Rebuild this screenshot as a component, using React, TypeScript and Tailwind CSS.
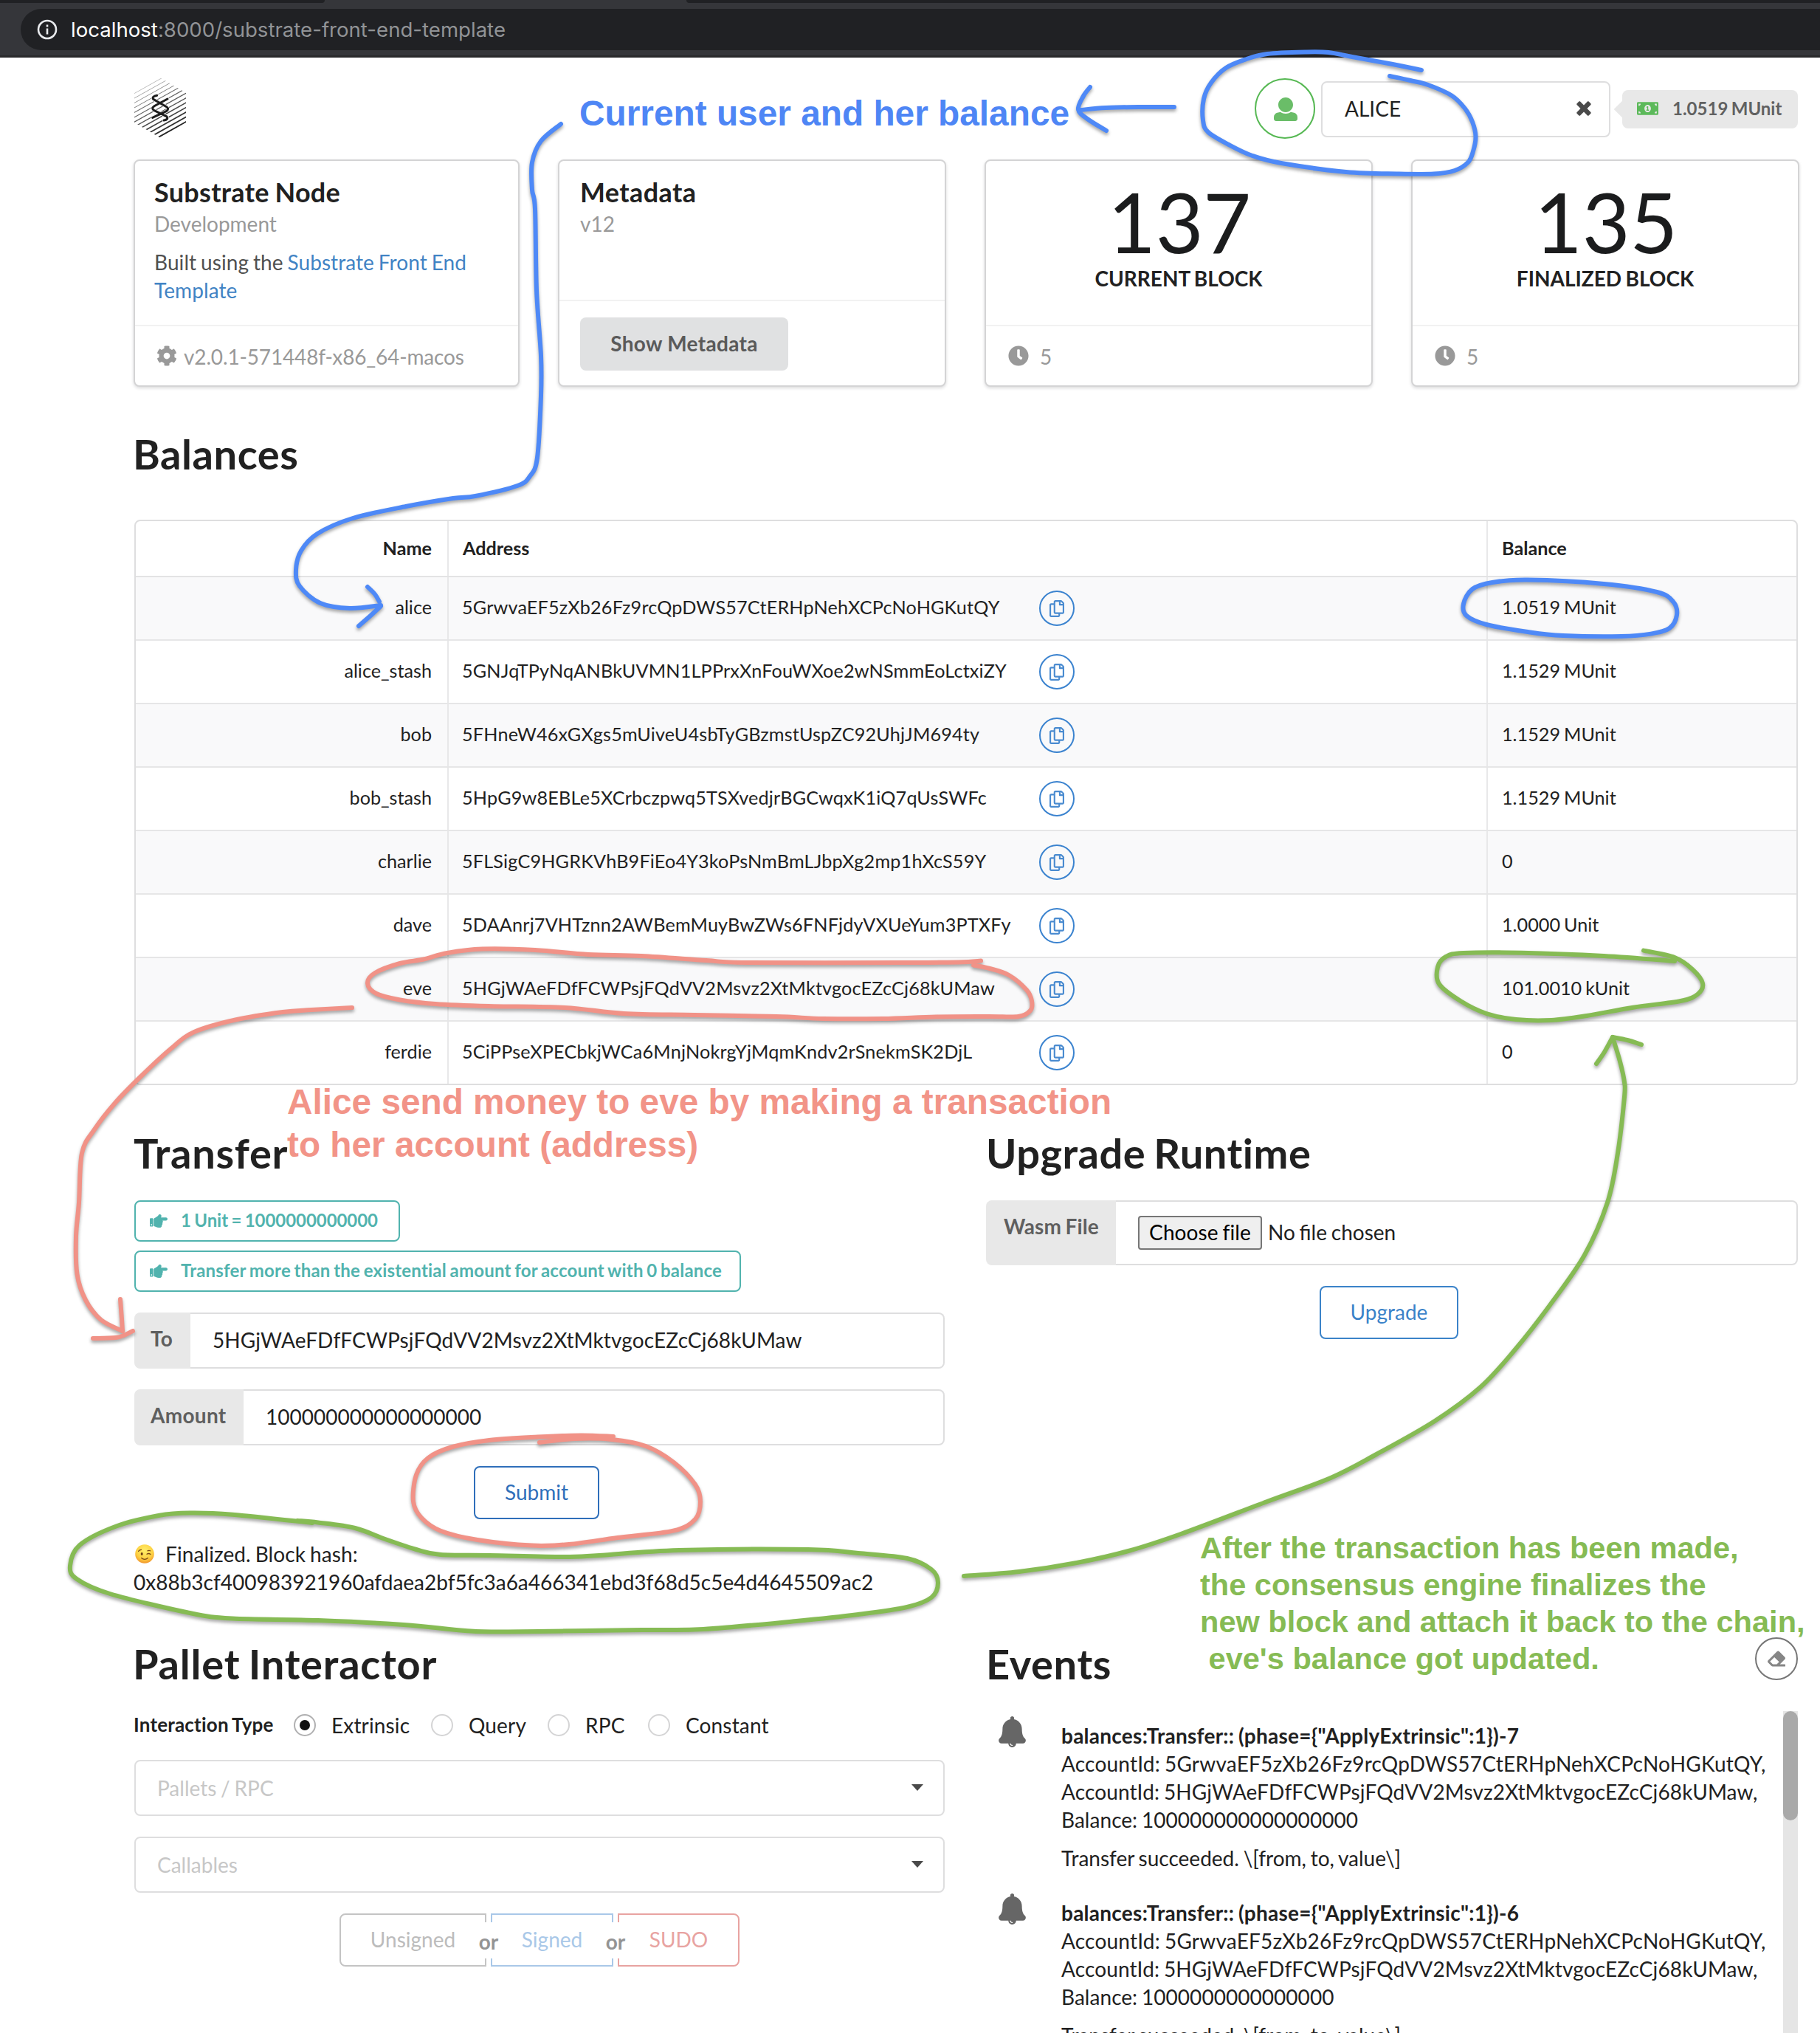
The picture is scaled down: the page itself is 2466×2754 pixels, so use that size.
import type { ReactNode } from 'react'
import { FaCog, FaClock, FaRegCopy, FaHandPointRight, FaEraser, FaMoneyBillAlt } from 'react-icons/fa'

const accounts = [
  { name: 'alice', address: '5GrwvaEF5zXb26Fz9rcQpDWS57CtERHpNehXCPcNoHGKutQY', balance: '1.0519 MUnit' },
  { name: 'alice_stash', address: '5GNJqTPyNqANBkUVMN1LPPrxXnFouWXoe2wNSmmEoLctxiZY', balance: '1.1529 MUnit' },
  { name: 'bob', address: '5FHneW46xGXgs5mUiveU4sbTyGBzmstUspZC92UhjJM694ty', balance: '1.1529 MUnit' },
  { name: 'bob_stash', address: '5HpG9w8EBLe5XCrbczpwq5TSXvedjrBGCwqxK1iQ7qUsSWFc', balance: '1.1529 MUnit' },
  { name: 'charlie', address: '5FLSigC9HGRKVhB9FiEo4Y3koPsNmBmLJbpXg2mp1hXcS59Y', balance: '0' },
  { name: 'dave', address: '5DAAnrj7VHTznn2AWBemMuyBwZWs6FNFjdyVXUeYum3PTXFy', balance: '1.0000 Unit' },
  { name: 'eve', address: '5HGjWAeFDfFCWPsjFQdVV2Msvz2XtMktvgocEZcCj68kUMaw', balance: '101.0010 kUnit' },
  { name: 'ferdie', address: '5CiPPseXPECbkjWCa6MnjNokrgYjMqmKndv2rSnekmSK2DjL', balance: '0' },
]

const events = [
  { id: 7, amount: '100000000000000000' },
  { id: 6, amount: '1000000000000000' },
]

type Point = [number, number]

// Catmull-Rom spline through the points, as cubic segments.
function smooth(points: Point[], closed = false): string {
  const n = points.length
  const at = (i: number): Point => (closed ? points[(i + n) % n] : points[Math.max(0, Math.min(n - 1, i))])
  let d = `M${points[0][0]} ${points[0][1]}`
  const segments = closed ? n : n - 1
  for (let i = 0; i < segments; i++) {
    const [p0, p1, p2, p3] = [at(i - 1), at(i), at(i + 1), at(i + 2)]
    d += `C${p1[0] + (p2[0] - p0[0]) / 6} ${p1[1] + (p2[1] - p0[1]) / 6} ${p2[0] - (p3[0] - p1[0]) / 6} ${p2[1] - (p3[1] - p1[1]) / 6} ${p2[0]} ${p2[1]}`
  }
  return d
}

const blueStrokes = [
  smooth([[760, 168], [733, 191], [721, 220], [721, 257], [725, 283], [727, 393], [733, 482], [733, 536], [728, 620], [718, 645], [701, 658], [644, 672], [614, 675], [550, 686], [478, 702], [430, 723], [408, 746], [401, 772], [406, 794], [434, 817], [474, 824], [516, 820]]),
  smooth([[498, 795], [508, 805], [514, 815]]),
  smooth([[516, 821], [502, 834], [486, 848]]),
  smooth([[1926, 95], [1887, 87], [1832, 77], [1800, 71], [1768, 70.5], [1717, 73], [1689, 80], [1661, 92], [1641, 112], [1631, 134], [1630, 163], [1637, 179], [1665, 196], [1697, 211], [1736, 221], [1824, 233], [1895, 235.5], [1943, 235.5], [1971, 231], [1989, 220], [1996, 205], [1999.5, 185], [1995, 165], [1985, 147], [1967, 129.5], [1935, 115], [1911, 109], [1883, 103]]),
  smooth([[1591, 145], [1542, 145], [1498, 146], [1464, 149]]),
  smooth([[1477, 118], [1468, 130], [1461, 148.5], [1474, 161.5], [1499, 177]]),
  smooth([[2070, 785.6], [2173, 791], [2245, 802], [2267, 815], [2272, 833], [2262, 851], [2237, 858.6], [2197, 862], [2118, 861], [2070, 856], [2014, 846], [1987, 834], [1983, 818], [1995, 798], [2022, 789]], true),
]

const pinkStrokes = [
  smooth([[1329, 1301.5], [1299, 1303.5], [1220, 1304], [1012, 1304], [957, 1301], [869, 1295], [797, 1293], [725, 1287], [654, 1285.6], [606, 1291], [574, 1299.5], [542, 1305], [508, 1318], [498, 1332], [510, 1346], [542, 1354.5], [590, 1360], [662, 1363], [765, 1365], [845, 1373], [941, 1375], [1052, 1377], [1116, 1380], [1196, 1380], [1268, 1377.5], [1339, 1377], [1380, 1377], [1396, 1369], [1398, 1356], [1391, 1341], [1367, 1321], [1341, 1312], [1319, 1307.5]]),
  smooth([[477, 1365], [422, 1368], [383, 1371], [319, 1381.5], [263, 1398], [231, 1421], [191, 1458], [156, 1494], [128, 1530], [111, 1562], [107, 1629], [103, 1675], [104.5, 1726], [116, 1761], [137, 1788], [166, 1803]]),
  smooth([[163, 1760], [165, 1787], [166, 1803]]),
  smooth([[126, 1813], [157, 1812], [170, 1808], [180, 1803]]),
  smooth([[831, 1946], [787, 1944.5], [729, 1946.6], [663, 1951], [613, 1960], [580, 1975], [564, 1998], [560, 2034], [571, 2056], [597, 2073.7], [647, 2086], [721, 2093.6], [771, 2092], [837, 2083], [912, 2073.7], [942, 2058], [949, 2034], [942, 2011], [913, 1981], [875, 1959], [829, 1950], [779, 1949], [731, 1954]]),
]

const greenStrokes = [
  smooth([[403, 2060], [431, 2062.5], [481, 2070], [522, 2085], [564, 2099], [597, 2106], [663, 2107], [763, 2109], [812, 2107], [920, 2100], [1095, 2099], [1163, 2104], [1229, 2111], [1262, 2126], [1271, 2144], [1262, 2164], [1229, 2177], [1163, 2187], [1079, 2196], [953, 2207], [870, 2208], [688, 2210.4], [630, 2209], [547, 2201], [431, 2195], [315, 2192.5], [257, 2185], [149, 2159], [104, 2139], [95, 2121], [108, 2093], [157.5, 2067.5], [215, 2053], [257, 2049.5], [315, 2051.7], [423, 2063]]),
  smooth([[1306, 2135], [1381, 2129], [1459, 2117], [1529, 2101], [1600, 2078], [1717, 2034], [1803, 2002], [1865, 1970], [1944, 1925], [2006, 1879], [2053, 1828], [2100, 1768], [2147, 1700], [2178, 1629], [2192, 1562], [2201, 1486], [2201, 1466], [2195, 1438], [2185, 1405]]),
  smooth([[2163, 1441], [2174, 1425], [2185, 1405]]),
  smooth([[2185, 1405], [2205, 1409], [2224, 1415]]),
  smooth([[2227, 1287.6], [2269, 1297], [2293, 1313], [2307, 1332], [2300, 1347], [2277, 1356], [2213, 1364.7], [2150, 1376], [2102, 1382], [2054, 1381], [2014, 1373], [1979, 1356], [1950, 1333], [1948, 1310], [1959, 1296], [1983, 1291], [2062, 1290.7], [2173, 1295], [2269, 1302]]),
]

function Strokes({ color, paths }: { color: string; paths: string[] }) {
  return (
    <g stroke={color} fill="none" strokeWidth="6" strokeLinecap="round" strokeLinejoin="round">
      {paths.map((d) => (
        <path key={d} d={d} />
      ))}
    </g>
  )
}

function Logo() {
  return (
    <svg viewBox="36 32 210 240" className="h-[80px] w-[70px]">
      <clipPath id="hex">
        <polygon points="142,30 246,91 246,212 140,273 36,212 36,91" />
      </clipPath>
      <g clipPath="url(#hex)">
        {Array.from({ length: 13 }, (_, k) => (
          <line key={k} x1={30} x2={250} y1={97 + 19.4 * k} y2={-26 + 19.4 * k} stroke="#222" strokeWidth={1.8 + k * 0.34} strokeOpacity={0.5 + k * 0.04} />
        ))}
      </g>
      <g fill="none" strokeLinecap="round">
        <g stroke="#fff" strokeWidth="13">
          <path d="M128 102Q106 106 113 117L167 148Q179 157 166 166L110 192" />
          <path d="M171 116L117 145Q103 155 117 163L168 188Q176 200 156 203" />
        </g>
        <g stroke="#1d1d1d" strokeWidth="9">
          <path d="M128 102Q106 106 113 117L167 148Q179 157 166 166L110 192" />
          <path d="M171 116L117 145Q103 155 117 163L168 188Q176 200 156 203" />
        </g>
      </g>
    </svg>
  )
}

function UserIcon() {
  return (
    <svg viewBox="0 0 512 512" fill="currentColor" className="h-8 w-8">
      <path d="M256 0c88.366 0 160 71.634 160 160s-71.634 160-160 160S96 248.366 96 160 167.634 0 256 0zm183.283 333.821l-71.313-17.828c-74.923 53.89-165.738 41.864-223.94 0l-71.313 17.828C29.981 344.505 0 382.903 0 426.955V464c0 26.51 21.49 48 48 48h416c26.51 0 48-21.49 48-48v-37.045c0-44.052-29.981-82.45-72.717-93.134z" />
    </svg>
  )
}

function CloseIcon() {
  return (
    <svg viewBox="0 0 384 512" fill="currentColor" className="h-[26px] w-5">
      <path d="M323.1 441l53.9-53.9c9.4-9.4 9.4-24.5 0-33.9L279.8 256l97.2-97.2c9.4-9.4 9.4-24.5 0-33.9L323.1 71c-9.4-9.4-24.5-9.4-33.9 0L192 168.2 94.8 71c-9.4-9.4-24.5-9.4-33.9 0L7 124.9c-9.4 9.4-9.4 24.5 0 33.9l97.2 97.2L7 353.2c-9.4 9.4-9.4 24.5 0 33.9L60.9 441c9.4 9.4 24.5 9.4 33.9 0l97.2-97.2 97.2 97.2c9.3 9.3 24.5 9.3 33.9 0z" />
    </svg>
  )
}

function BellIcon() {
  return (
    <svg viewBox="0 0 448 512" fill="currentColor" className="h-[42px] w-[37px]">
      <path d="M433.884 366.059C411.634 343.809 384 316.118 384 208c0-79.394-57.831-145.269-133.663-157.83A31.845 31.845 0 0 0 256 32c0-17.673-14.327-32-32-32s-32 14.327-32 32c0 6.75 2.095 13.008 5.663 18.17C121.831 62.731 64 128.606 64 208c0 108.118-27.643 135.809-49.893 158.059C-16.042 396.208 5.325 448 48.048 448H160c0 35.346 28.654 64 64 64s64-28.654 64-64h111.943c42.638 0 64.151-51.731 33.941-81.941zM224 472a8 8 0 0 1 0 16c-22.056 0-40-17.944-40-40h16c0 13.234 10.766 24 24 24z" />
    </svg>
  )
}

function WinkFace() {
  return (
    <svg viewBox="0 0 26 26" className="h-[26px] w-[26px]">
      <defs>
        <radialGradient id="face" cx="50%" cy="32%" r="68%">
          <stop offset="0" stopColor="#ffee6a" />
          <stop offset="0.65" stopColor="#fdd042" />
          <stop offset="1" stopColor="#f1962c" />
        </radialGradient>
      </defs>
      <circle cx="13" cy="13" r="12.8" fill="url(#face)" />
      <ellipse cx="9.2" cy="13" rx="1.5" ry="2.1" fill="#6b3d12" />
      <g stroke="#7a4716" fill="none" strokeLinecap="round" strokeWidth="1.3">
        <path d="M16 13.2Q18.6 11.6 21 13.6" />
        <path d="M4.6 9.4Q6 7.4 8.4 7.4" />
        <path d="M17 8.8Q19 7.8 20.6 8.8" />
        <path d="M8.6 18.6Q13 22 17.4 18.6" />
      </g>
    </svg>
  )
}

function Card({ children, extra, tall }: { children: ReactNode; extra: ReactNode; tall?: boolean }) {
  return (
    <div className="flex h-[308px] flex-col rounded-lg border-2 border-[#d4d4d5] bg-white shadow-[0_2px_4px_0_#dcdcdd]">
      <div className="flex-1 px-[26px] pt-5">{children}</div>
      <div className={tall ? 'h-[116px] border-t-2 border-[#f2f2f2] px-[26px] pt-[22px]' : 'h-[82px] border-t-2 border-[#f2f2f2] px-[26px] pt-[22px]'}>{extra}</div>
    </div>
  )
}

function BlockCard({ value, label }: { value: string; label: string }) {
  return (
    <Card
      extra={
        <div className="flex h-[38px] items-center pl-1 text-[#999]">
          <FaClock className="-mt-0.5 h-7 w-7" />
          <span className="ml-[15px]">5</span>
        </div>
      }
    >
      <div className="flex flex-col items-center pt-3">
        <div className="h-[100px] pl-0.5 text-[112px] leading-[100px] tracking-[-0.3px] text-[#1b1c1d]">{value}</div>
        <div className="mt-2 h-[38px] font-bold">{label}</div>
      </div>
    </Card>
  )
}

function Heading({ children, className }: { children: ReactNode; className: string }) {
  return <h1 className={`h-[72px] whitespace-nowrap text-[56px] font-bold leading-[72px] [word-spacing:-3px] ${className}`}>{children}</h1>
}

function Hint({ children, className = '' }: { children: ReactNode; className?: string }) {
  return (
    <div className={`flex h-14 items-center self-start rounded-lg border-2 border-[#51b3ae] pb-[3px] pl-[19px] text-2xl font-bold text-[#51b3ae] ${className}`}>
      <FaHandPointRight className="mt-0.5 h-6 w-6" />
      <span className="ml-[18px] whitespace-nowrap">{children}</span>
    </div>
  )
}

function Field({ label, children, className = '' }: { label: string; children: ReactNode; className?: string }) {
  return (
    <div className="flex h-[76px] w-[1098px]">
      <div className={`rounded-l-lg bg-[#e8e8e8] pl-[22px] pt-4 font-bold tracking-[0.3px] text-[#5f5f5f] ${className}`}>{label}</div>
      <div className="flex flex-1 items-center rounded-r-lg border-2 border-l-0 border-[#dededf] pb-0.5 pl-[30px]">{children}</div>
    </div>
  )
}

function Select({ label }: { label: string }) {
  return (
    <div className="flex h-[76px] w-[1098px] items-center justify-between rounded-lg border-2 border-[#dededf] pb-px pl-[29px] pr-[27px] text-[#c7c7c7]">
      <span>{label}</span>
      <svg viewBox="0 0 16 9" className="h-[9px] w-4 fill-[#4a4a4a]">
        <path d="M0 0H16L8 9Z" />
      </svg>
    </div>
  )
}

function Radio({ label, checked, className }: { label: string; checked?: boolean; className: string }) {
  return (
    <div className={`flex items-center ${className}`}>
      <span className={checked ? 'flex h-[30px] w-[30px] items-center justify-center rounded-full border-2 border-[#b0b0b1]' : 'h-[30px] w-[30px] rounded-full border-2 border-[#d4d4d5]'}>
        {checked && <span className="h-[14px] w-[14px] rounded-full bg-[#111]" />}
      </span>
      <span className="ml-[21px] tracking-[0.15px]">{label}</span>
    </div>
  )
}

function Or() {
  return (
    <div className="relative z-10 w-1.5">
      <span className="absolute -left-3 top-3 flex h-[49px] w-[30px] items-center justify-center bg-white pb-0.5 pt-1 font-bold text-[#949494]">or</span>
    </div>
  )
}

export default function App() {
  return (
    <div className="relative flex h-[2754px] w-[2466px] flex-col overflow-hidden bg-white font-['Lato',sans-serif] text-[28px] leading-[38px] text-[#212121] [word-spacing:-1.4px]">
      {/* Browser chrome */}
      <div className="h-[78px] border-b-[3px] border-[#29292b] bg-[#35363a]">
        <div className="flex justify-between">
          <div className="h-1 w-[440px] rounded-br bg-[#202124]" />
          <div className="h-1 w-[1536px] rounded-bl bg-[#202124]" />
        </div>
        <div className="ml-7 mt-2 flex h-14 items-center rounded-l-full bg-[#202124] pl-[22px]">
          <svg viewBox="0 0 28 28" className="h-7 w-7" fill="none" stroke="#e8eaed" strokeWidth="2.6">
            <circle cx="14" cy="14" r="12" />
            <path d="M14 12.5V20.5M14 7.6V10.4" />
          </svg>
          <span className="ml-[18px] whitespace-nowrap font-['Inter',sans-serif] text-[27.6px]">
            <span className="text-white">localhost</span>
            <span className="text-[#919396]">:8000/substrate-front-end-template</span>
          </span>
        </div>
      </div>

      {/* Account bar */}
      <div className="flex h-[138px] items-start justify-between pl-[182px] pr-[30px] pt-7">
        <Logo />
        <div className="flex items-center">
          <div className="flex h-[82px] w-[82px] items-center justify-center rounded-full border-2 border-[#56b853] pl-0.5 pt-0.5 text-[#6abd68]">
            <UserIcon />
          </div>
          <div className="ml-2 mt-0.5 flex h-[76px] w-[392px] items-center justify-between rounded-lg border-2 border-[#dededf] pl-[30px] pr-6">
            <span className="-mt-0.5">ALICE</span>
            <span className="-mt-0.5 text-[#4a4a4a]">
              <CloseIcon />
            </span>
          </div>
          <div className="relative ml-4 mt-px flex h-[52px] w-[238px] items-center rounded-lg bg-[#e8e8e8] pl-5 text-2xl font-bold text-[#616161]">
            <span className="absolute -left-2 top-[18px] h-4 w-4 rotate-45 bg-[#e8e8e8]" />
            <FaMoneyBillAlt className="relative -mt-0.5 h-6 w-[29px] text-[#5cb95a]" />
            <span className="-mt-px ml-[19px] whitespace-nowrap">1.0519 MUnit</span>
          </div>
        </div>
      </div>

      {/* Node, metadata and block cards */}
      <div className="ml-[181px] grid grid-cols-[523px_526px_526px_526px] gap-[52px]">
        <Card
          extra={
            <div className="flex h-[38px] items-center pl-[3px] text-[#999]">
              <FaCog className="-mt-0.5 h-7 w-7" />
              <span className="ml-[9px] whitespace-nowrap tracking-[-0.15px]">v2.0.1-571448f-x86_64-macos</span>
            </div>
          }
        >
          <div className="h-11 text-[36px] font-bold leading-[44px] tracking-[0.3px]">Substrate Node</div>
          <div className="mt-0.5 text-[#999]">Development</div>
          <p className="mt-[14px] tracking-[0.08px] text-[#505050]">
            Built using the <span className="text-[#4183c4]">Substrate Front End Template</span>
          </p>
        </Card>
        <Card
          tall
          extra={<button className="ml-0.5 h-[72px] w-[282px] rounded-lg bg-[#e0e1e2] pb-[3px] font-bold tracking-[0.3px] text-[#5a5a5a]">Show Metadata</button>}
        >
          <div className="h-11 pl-0.5 text-[36px] font-bold leading-[44px] tracking-[0.4px]">Metadata</div>
          <div className="mt-0.5 pl-0.5 text-[#999]">v12</div>
        </Card>
        <BlockCard value="137" label="CURRENT BLOCK" />
        <BlockCard value="135" label="FINALIZED BLOCK" />
      </div>

      {/* Balances */}
      <div className="ml-[182px] mt-[55px] w-[2254px]">
        <Heading className="-ml-0.5 tracking-[0.6px]">Balances</Heading>
        <div className="mt-[53px] overflow-hidden rounded-lg border-2 border-[#dededf] text-[25.2px]">
          <div className="grid h-[76px] grid-cols-[422px_1408px_1fr] border-b-2 border-[#e3e3e4] font-bold">
            <div className="flex items-center justify-end pb-0.5 pr-[21px]">Name</div>
            <div className="flex items-center border-l-2 border-[#e8e8e9] pb-0.5 pl-[19px]">Address</div>
            <div className="flex items-center border-l-2 border-[#e8e8e9] pb-0.5 pl-[19px]">Balance</div>
          </div>
          {accounts.map((a) => (
            <div key={a.name} className="grid h-[86px] grid-cols-[422px_1408px_1fr] border-b-2 border-[#e6e6e7] odd:bg-white even:bg-[#f9f9fa] last:h-[84px] last:border-b-0">
              <div className="flex items-center justify-end pb-[5px] pr-[21px]">{a.name}</div>
              <div className="flex items-center border-l-2 border-[#e8e8e9] pl-[18px]">
                <span className="w-[782px] whitespace-nowrap pb-[5px] tracking-[0.18px]">{a.address}</span>
                <span className="flex h-12 w-12 items-center justify-center rounded-full border-2 border-[#3b83cf] text-[#4a8bd0]">
                  <FaRegCopy className="h-[23px] w-5" />
                </span>
              </div>
              <div className="flex items-center border-l-2 border-[#e8e8e9] pb-[5px] pl-[19px]">{a.balance}</div>
            </div>
          ))}
        </div>
      </div>

      {/* Transfer and upgrade */}
      <div className="ml-[182px] mt-14 flex h-[692px]">
        <div className="flex w-[1154px] flex-col">
          <Heading className="-ml-px tracking-[0.75px]">Transfer</Heading>
          <Hint className="mt-7 w-[360px] tracking-[-0.05px]">1 Unit = 1000000000000</Hint>
          <Hint className="mt-3 w-[822px] tracking-[0.2px]">Transfer more than the existential amount for account with 0 balance</Hint>
          <div className="mt-7 flex flex-col gap-7">
            <Field label="To" className="w-[76px]">
              <span className="tracking-[0.12px]">5HGjWAeFDfFCWPsjFQdVV2Msvz2XtMktvgocEZcCj68kUMaw</span>
            </Field>
            <Field label="Amount" className="w-[148px]">100000000000000000</Field>
          </div>
          <button className="ml-[460px] mt-7 h-[72px] w-[170px] rounded-lg border-2 border-[#2f6fba] pb-0.5 text-[#2f6fba]">Submit</button>
          <div className="-ml-px mt-7 whitespace-nowrap">
            <div className="flex items-center">
              <span className="ml-0.5">
                <WinkFace />
              </span>
              <span className="ml-[15px] tracking-[0.1px]">Finalized. Block hash:</span>
            </div>
            <div>0x88b3cf400983921960afdaea2bf5fc3a6a466341ebd3f68d5c5e4d4645509ac2</div>
          </div>
        </div>
        <div className="w-[1100px]">
          <Heading className="tracking-[0.5px]">Upgrade Runtime</Heading>
          <div className="mt-7 flex h-[88px]">
            <div className="w-[176px] rounded-l-lg bg-[#e8e8e8] pl-6 pt-4 font-bold tracking-[0.1px] text-[#5f5f5f]">Wasm File</div>
            <div className="flex flex-1 items-center rounded-r-lg border-2 border-l-0 border-[#dededf] pl-[30px]">
              <span className="flex h-[46px] w-[168px] items-center justify-center rounded border-2 border-[#767676] bg-[#efefef] pb-0.5 tracking-[0.1px] text-black">Choose file</span>
              <span className="ml-2 pb-0.5">No file chosen</span>
            </div>
          </div>
          <button className="ml-[452px] mt-7 h-[72px] w-[188px] rounded-lg border-2 border-[#3b83c9] pb-0.5 text-[#3b83c9]">Upgrade</button>
        </div>
      </div>

      {/* Pallet interactor and events */}
      <div className="ml-[182px] flex">
        <div className="flex w-[1154px] flex-col">
          <Heading className="-ml-0.5 tracking-[0.8px]">Pallet Interactor</Heading>
          <div className="mt-[27px] flex h-10 items-center">
            <span className="-ml-px w-[217px] whitespace-nowrap pb-0.5 text-[26px] font-bold tracking-[0.2px]">Interaction Type</span>
            <Radio label="Extrinsic" checked className="w-[186px]" />
            <Radio label="Query" className="w-[158px]" />
            <Radio label="RPC" className="w-[136px]" />
            <Radio label="Constant" className="w-[170px]" />
          </div>
          <div className="mt-[27px] flex flex-col gap-7">
            <Select label="Pallets / RPC" />
            <Select label="Callables" />
          </div>
          <div className="ml-[278px] mt-7 flex h-[72px]">
            <button className="w-[199px] rounded-l-lg border-2 border-[#c4c4c4] pb-0.5 text-[#bcbcbc]">Unsigned</button>
            <Or />
            <button className="w-[166px] border-2 border-[#a9c8e8] pb-0.5 text-[#a9c8e8]">Signed</button>
            <Or />
            <button className="w-[165px] rounded-r-lg border-2 border-[#e8a3a1] pb-0.5 text-[#e8a3a1]">SUDO</button>
          </div>
        </div>
        <div className="w-[1100px]">
          <div className="flex h-[100px] items-start justify-between">
            <Heading className="tracking-[0.6px]">Events</Heading>
            <span className="flex h-[58px] w-[58px] items-center justify-center rounded-full border-2 border-[#767676] pr-px text-[#868686]">
              <FaEraser className="h-6 w-6" />
            </span>
          </div>
          <div className="flex h-[436px] overflow-hidden">
            <div className="flex-1 pl-[17px]">
              {events.map((e) => (
                <div key={e.id} className="flex h-60 whitespace-nowrap">
                  <div className="w-[85px] pt-[7px] text-[#666]">
                    <BellIcon />
                  </div>
                  <div className="pt-[14px]">
                    <div className="font-bold tracking-[0.26px]">{`balances:Transfer:: (phase={"ApplyExtrinsic":1})-${e.id}`}</div>
                    <div className="tracking-[0.21px]">AccountId: 5GrwvaEF5zXb26Fz9rcQpDWS57CtERHpNehXCPcNoHGKutQY,</div>
                    <div className="tracking-[0.12px]">AccountId: 5HGjWAeFDfFCWPsjFQdVV2Msvz2XtMktvgocEZcCj68kUMaw,</div>
                    <div className="tracking-[0.04px]">Balance: {e.amount}</div>
                    <div className="mt-[14px]">{'Transfer succeeded. \\[from, to, value\\]'}</div>
                  </div>
                </div>
              ))}
            </div>
            <div className="w-5 bg-[#e5e5e5]">
              <div className="h-[148px] rounded-full bg-[#a9a9a9]" />
            </div>
          </div>
        </div>
      </div>

      {/* Hand-drawn annotations laid over the page */}
      <svg viewBox="0 0 2466 2754" className="pointer-events-none absolute inset-0 h-full w-full drop-shadow-[0_3px_2px_rgba(0,0,0,0.35)]">
        <Strokes color="#4e89f7" paths={blueStrokes} />
        <Strokes color="#f19287" paths={pinkStrokes} />
        <Strokes color="#86bb54" paths={greenStrokes} />
      </svg>
      <div className="pointer-events-none absolute inset-0 whitespace-pre font-['Liberation_Sans',sans-serif] font-bold [word-spacing:0px]">
        <div className="absolute left-[785px] top-[126px] text-[47.8px] leading-[56px] text-[#4e86f5]">Current user and her balance</div>
        <div className="absolute left-[389px] top-[1464px] text-[47.75px] leading-[58px] text-[#f29488]">{'Alice send money to eve by making a transaction\nto her account (address)'}</div>
        <div className="absolute left-[1626px] top-[2072px] text-[41.55px] leading-[50px] text-[#86bb54]">{"After the transaction has been made,\nthe consensus engine finalizes the\nnew block and attach it back to the chain,\n eve's balance got updated."}</div>
      </div>
    </div>
  )
}
